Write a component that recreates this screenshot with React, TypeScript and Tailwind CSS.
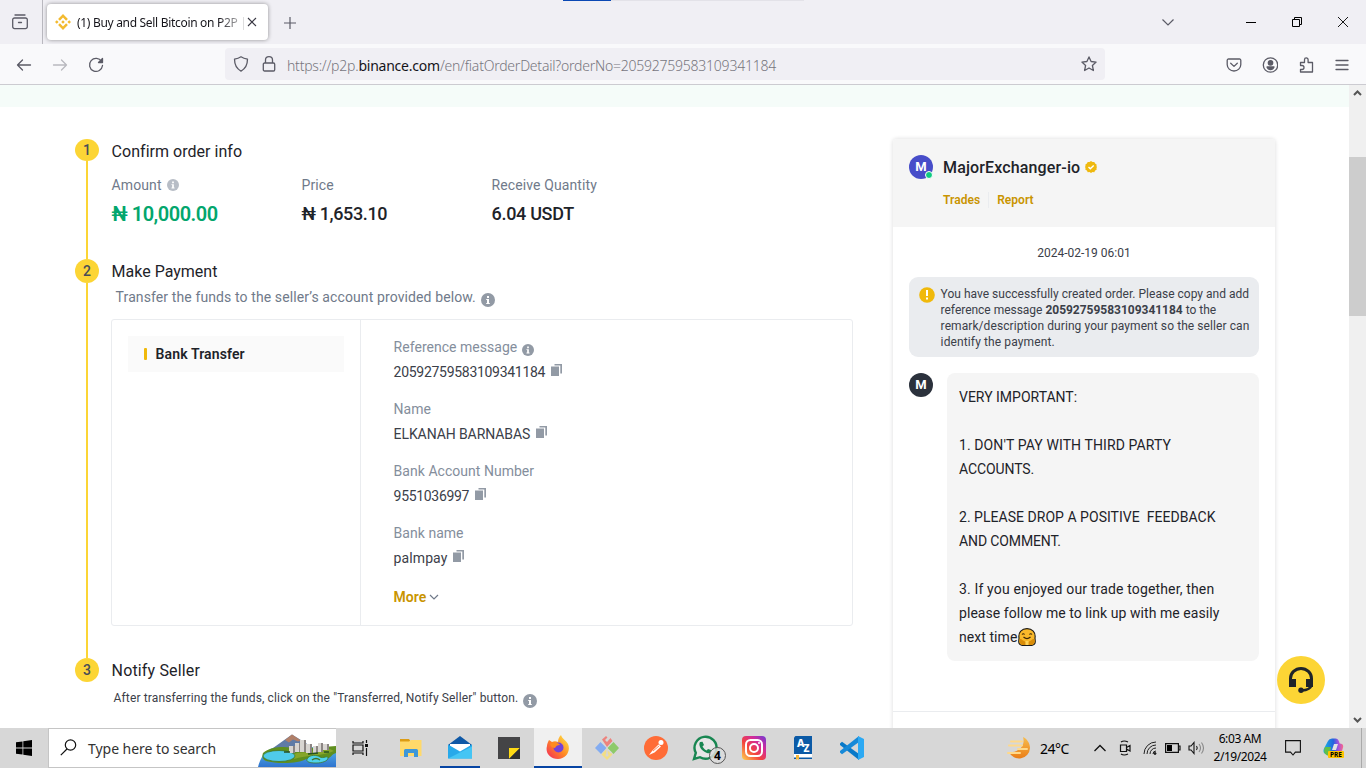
import React from "react";

const INK = "text-[#1e2329]";

function Info({ c = "#929aa5", s = 14 }: { c?: string; s?: number }) {
  return (
    <svg width={s} height={s} viewBox="0 0 14 14" className="shrink-0">
      <circle cx="7" cy="7" r="7" fill={c} />
      <path d="M6 3h2v2H6zM5.2 6H8v4h.8v1H5.2v-1H6V7h-.8z" fill="#fff" />
    </svg>
  );
}

function Copy() {
  return (
    <svg width="11" height="12" viewBox="0 0 11 12" className="shrink-0">
      <path d="M0 2.5h8V12H0zM3.5 0H11v9.5H9.3V1.5H3.5z" fill="#929aa5" />
    </svg>
  );
}

function TopIcon({ children, w = 16 }: { children: React.ReactNode; w?: number }) {
  return (
    <svg width={w} height={w} viewBox="0 0 16 16" fill="none" stroke="#5b5b66" strokeWidth="1.3" strokeLinecap="round" strokeLinejoin="round" className="shrink-0">
      {children}
    </svg>
  );
}

function TabBar() {
  return (
    <div className="flex h-11 bg-[#f0eff4]">
      <div className="flex w-[43px] items-center border-r border-[#b9b8bf] pl-3">
        <TopIcon>
          <path d="M3 1h10M2.5 4h11a1.8 1.8 0 0 1 1.8 1.8v7a1.8 1.8 0 0 1-1.8 1.8h-11A1.8 1.8 0 0 1 .7 12.800v-7A1.800 1.800 0 0 1 2.500 4zM6.500 8.500h3" />
        </TopIcon>
      </div>
      <div className="mt-1 ml-1 flex h-9 w-[221px] items-center rounded bg-white pl-2 shadow-[0_0_4px_rgba(0,0,0,0.4)]">
        <svg width="16" height="16" viewBox="0 0 16 16" fill="#f3ba2f" className="shrink-0">
          <path d="M4.900 6.700 8 3.600l3.100 3.100 1.800-1.800L8 0 3.100 4.900zM0 8l1.800-1.800L3.600 8 1.800 9.800zM4.900 9.300 8 12.400l3.100-3.100 1.800 1.800L8 16l-4.900-4.900zM12.400 8l1.800-1.800L16 8l-1.800 1.800zM9.800 8 8 6.200 6.200 8 8 9.800z" />
        </svg>
        <span className="mt-px ml-[6px] w-[168px] shrink-0 bg-linear-to-r from-[#15141a] from-84% to-[#15141a20] bg-clip-text font-['Noto_Sans'] text-[12px] tracking-[-0.31px] whitespace-nowrap text-transparent">
          (1) Buy and Sell Bitcoin on P2P |
        </span>
        <svg width="10" height="10" viewBox="0 0 10 10" stroke="#3a3944" strokeWidth="1.100" className="ml-[2px]">
          <path d="m1 1 8 8M9 1 1 9" />
        </svg>
      </div>
      <svg width="12" height="12" viewBox="0 0 12 12" stroke="#5b5b66" strokeWidth="1.200" className="mt-[17px] ml-4">
        <path d="M6 0v12M0 6h12" />
      </svg>
      <div className="ml-[267px] flex h-px w-[241px] bg-[#e3e2e8]">
        <div className="h-px w-12 bg-[#0a48b4]" />
      </div>
      <div className="mr-[18px] ml-auto flex h-11 items-center">
        <svg width="12" height="7" viewBox="0 0 12 7" fill="none" stroke="#5b5b66" strokeWidth="1.200" className="mr-[72px]">
          <path d="m.5.5 5.500 5.500L11.500.5" />
        </svg>
        <div className="mr-9 h-px w-[10px] bg-black" />
        <svg width="10" height="10" viewBox="0 0 10 10" fill="none" stroke="#000" className="mr-9">
          <path d="M.5 2.500h7v7h-7zM2.500 2.500v-2h7v7h-2" />
        </svg>
        <svg width="10" height="10" viewBox="0 0 10 10" stroke="#000" strokeWidth=".9">
          <path d="m0 0 10 10M10 0 0 10" />
        </svg>
      </div>
    </div>
  );
}

function NavBar() {
  return (
    <div className="flex h-[41px] items-center border-b border-[#cccbd1] bg-[#f9f9fb] pt-px pl-4">
      <TopIcon><path d="M14.500 8h-13M6.500 3l-5 5 5 5" /></TopIcon>
      <div className="ml-5 flex opacity-40"><TopIcon><path d="M1.500 8h13M9.500 3l5 5-5 5" /></TopIcon></div>
      <div className="ml-5 flex">
        <TopIcon><path d="M13.600 4.500A6.500 6.500 0 1 0 14.500 8.500" /><path d="M14.500 1.500v4h-4z" fill="#5b5b66" /></TopIcon>
      </div>
      <div className="-mt-px ml-[121px] flex h-8 w-[880px] items-center rounded bg-[#f0eff4] pl-2">
        <TopIcon><path d="M8 .8c2 1.400 4 2 6.500 2.300 0 5.400-1.500 9.400-6.500 12-5-2.600-6.500-6.600-6.500-12C4 2.800 6 2.200 8 .8z" /></TopIcon>
        <div className="ml-3 flex"><TopIcon><path d="M3.500 7h9a1.200 1.200 0 0 1 1.200 1.200v5.600a1.200 1.200 0 0 1-1.200 1.200h-9a1.200 1.200 0 0 1-1.200-1.200V8.200A1.200 1.200 0 0 1 3.500 7zM4.500 7V4a3.500 3.300 0 0 1 7 0v3" /></TopIcon></div>
        <span className="mt-[2px] ml-[10px] font-['Noto_Sans'] text-[14px] font-light tracking-[-0.23px] whitespace-nowrap text-[#77767e]">
          https://p2p.<span className="font-normal text-[#15141a]">binance.com</span>/en/fiatOrderDetail?orderNo=20592759583109341184
        </span>
        <div className="mr-2 ml-auto flex">
          <TopIcon><path d="m8 .9 2.100 4.600 5 .6-3.700 3.400 1 5L8 12l-4.400 2.500 1-5L.9 6.100l5-.6z" /></TopIcon>
        </div>
      </div>
      <div className="mr-4 ml-auto flex gap-5">
        <TopIcon><path d="M2.500 2h11a1.300 1.300 0 0 1 1.300 1.300V7.500a6.800 6.500 0 0 1-13.600 0V3.300A1.300 1.300 0 0 1 2.500 2zM4.700 6.300 8 9.400l3.300-3.100" /></TopIcon>
        <TopIcon><circle cx="8.500" cy="8" r="7.200" /><circle cx="8.500" cy="5.800" r="2.200" fill="#5b5b66" /><path d="M5 10h7c-.8 2-2 2.600-3.500 2.600S5.800 12 5 10z" fill="#5b5b66" /></TopIcon>
        <TopIcon><path d="M2.500 8.500V5.500H6.500V2.700a1.800 1.800 0 0 1 3.600 0v2.800h4.400V15h-12v-2.500h1.500a2 2 0 0 0 0-4z" /></TopIcon>
        <TopIcon><path d="M2 3.500h12M2 8h12M2 12.500h12" /></TopIcon>
      </div>
    </div>
  );
}

function Step({ n, h = "h-6" }: { n: number; h?: string }) {
  return (
    <div className={`flex w-6 shrink-0 items-center justify-center rounded-[50%] bg-[#fcd535] text-[14px] font-medium text-[#474d57] ${h}`}>{n}</div>
  );
}

const details = [
  ["Reference message", "20592759583109341184", "tracking-[-0.29px]"],
  ["Name", "ELKANAH BARNABAS", "tracking-[-0.09px]"],
  ["Bank Account Number", "9551036997", "tracking-[-0.32px]"],
  ["Bank name", "palmpay", "tracking-[0.1px]"],
];

function Order() {
  return (
    <div className="flex w-[778px] pt-8">
      <div className="mr-3 flex w-6 shrink-0 flex-col items-center">
        <Step n={1} h="h-[22px]" />
        <div className="h-[98px] w-0.5 bg-[#fcd535]" />
        <Step n={2} />
        <div className="h-[375px] w-0.5 bg-[#fcd535]" />
        <Step n={3} />
      </div>
      <div className="flex w-[742px] flex-col pt-px">
        <div className={`ml-[0.6px] flex h-6 items-center text-[16px] tracking-[0.03px] ${INK}`}>Confirm order info</div>
        <div className="mt-[9px] ml-[0.6px] flex h-6 items-center text-[14px] tracking-[0.1px] text-[#707a8a]">
          <span className="flex w-[190px] items-center gap-[5px]">Amount <Info c="#b7bdc6" s={12} /></span>
          <span className="w-[190px]">Price</span>
          <span>Receive Quantity</span>
        </div>
        <div className={`mt-[5px] ml-[0.6px] flex h-6 items-center text-[18px] font-medium tracking-[-0.32px] ${INK}`}>
          <span className="w-[190px] text-[20px] font-semibold tracking-[-0.5px] text-[#03a66d]">₦ 10,000.00</span>
          <span className="-mt-[2px] w-[190px] tracking-[-0.38px]">₦ 1,653.10</span>
          <span className="-mt-[2px]">6.04 USDT</span>
        </div>
        <div className={`mt-[34px] ml-[0.6px] flex h-6 items-center text-[16px] ${INK}`}>Make Payment</div>
        <div className="ml-[4.6px] flex h-[26px] items-center gap-[5.400px] text-[14px] text-[#707a8a]">
          <span className="tracking-[0.11px]">Transfer the funds to the seller’s account provided below.</span>
          <span className="mt-[5px]"><Info /></span>
        </div>
        <div className="mt-[9px] flex h-[307px] rounded-[3px] border border-[#eaecef]">
          <div className="w-[249px] border-r border-[#eaecef] p-4">
            <div className={`flex h-9 items-center bg-[#fafafa] pl-4 text-[14px] font-semibold tracking-[0.12px] ${INK}`}>
              <span className="mr-[8.600px] h-3 w-[3px] rounded-[1px] bg-[#f0b90b]" />Bank Transfer
            </div>
          </div>
          <div className="flex flex-col pt-[15px] pl-[32.600px] text-[14px]">
            {details.map(([k, v, t], i) => (
              <div key={k} className="h-[62px]">
                <div className="flex h-6 items-center gap-[5px] tracking-[0.03px] text-[#848e9c]">{k}{i === 0 && <span className="mt-[5px]"><Info s={12} /></span>}</div>
                <div className={`flex h-[26px] items-center gap-1.5 text-[#3b4049] ${t}`}>{v}<span className="-mt-[5px]"><Copy /></span></div>
              </div>
            ))}
            <div className="mt-[2px] flex h-6 items-center gap-[3px] font-semibold text-[#c99400]">More
              <svg width="10" height="6" viewBox="0 0 10 6" fill="none" stroke="#707a8a" strokeWidth="1.200"><path d="m1 1 4 4 4-4" /></svg>
            </div>
          </div>
        </div>
        <div className={`mt-[33px] ml-[0.6px] flex h-6 items-center text-[16px] tracking-[0.15px] ${INK}`}>Notify Seller</div>
        <div className="mt-px ml-[2.600px] flex h-7 items-center gap-[5px] text-[12px] tracking-[0.14px] text-[#3b4049]">
          <span>After transferring the funds, click on the "Transferred, Notify Seller" button.</span>
          <span className="mt-1.5"><Info /></span>
        </div>
      </div>
    </div>
  );
}

function Chat() {
  return (
    <div className="mt-8 ml-10 flex h-[620px] w-[382px] shrink-0 flex-col rounded-t-[4px] bg-white shadow-[0_0_4px_rgba(20,21,26,0.16)]">
      <div className="h-[88px] rounded-t-[4px] bg-[#f5f5f5] pt-4 pl-4">
        <div className="flex h-6 items-center">
          <div className="relative flex h-6 w-6 items-center justify-center rounded-full bg-[#474dc9] text-[13px] font-bold text-white">M
            <span className="absolute right-0 bottom-0 h-[8px] w-[8px] rounded-full border border-white bg-[#0ecb81]" />
          </div>
          <span className={`mt-px ml-[10px] text-[16px] font-medium tracking-[0.14px] ${INK}`}>MajorExchanger-io</span>
          <svg width="12" height="12" viewBox="0 0 12 12" className="ml-[5px]">
            <path d="m6 0 1.500 1L9.300.9l.8 1.600 1.500.9L11.500 5.200 12 6l-.5 1 .1 1.700-1.500.9-.8 1.600L7.500 11 6 12l-1.500-1-1.800.2-.8-1.600L.4 8.700.5 7 0 6l.5-1L.4 3.400l1.500-.9.8-1.600L4.500 1z" fill="#efb90f" />
            <path d="m3.500 6 1.800 1.800L8.700 4.400" fill="none" stroke="#fff" strokeWidth="1.400" />
          </svg>
        </div>
        <div className="mt-3 ml-[34px] flex h-[18px] items-center text-[12px] font-semibold tracking-[0.04px] text-[#c99400]">
          <span>Trades</span><span className="mx-2 h-4 w-px bg-[#eaecef]" /><span>Report</span>
        </div>
      </div>
      <div className="mt-4 flex h-5 items-center justify-center text-[12px] text-[#3b4049]">2024-02-19 06:01</div>
      <div className="mx-4 mt-[14px] flex h-20 rounded-[9px] bg-[#eaecef] pt-2 pl-[10px] text-[12px] leading-4 text-[#3b4049]">
        <svg width="16" height="16" viewBox="0 0 16 16" className="mt-[2px] mr-[5.600px] shrink-0">
          <circle cx="8" cy="8" r="7.800" fill="#f0b90b" /><path d="M7 3h2v6H7zM7 10.500h2v2H7z" fill="#fff" />
        </svg>
        <div className="pt-px whitespace-nowrap">
          <div className="tracking-[0.015px]">You have successfully created order. Please copy and add</div>
          <div className="tracking-[-0.02px]">reference message <b>20592759583109341184</b> to the</div>
          <div className="tracking-[0.08px]">remark/description during your payment so the seller can</div>
          <div className="tracking-[0.12px]">identify the payment.</div>
        </div>
      </div>
      <div className="mx-4 mt-4 flex">
        <div className="flex h-6 w-6 items-center justify-center rounded-full bg-[#2b313c] text-[13px] font-bold text-white">M</div>
        <div className={`ml-[14px] h-[288px] w-[312px] rounded-lg bg-[#f5f5f5] p-3 text-[14px] leading-6 tracking-[0.06px] whitespace-pre ${INK}`}>
          <div className="tracking-normal">VERY IMPORTANT:</div>
          <div className="mt-6 tracking-[0.1px]">1. DON'T PAY WITH THIRD PARTY</div>
          <div className="tracking-[-0.1px]">ACCOUNTS.</div>
          <div className="mt-6 tracking-[0.03px]">2. PLEASE DROP A POSITIVE  FEEDBACK</div>
          <div className="tracking-[-0.12px]">AND COMMENT.</div>
          <div className="mt-6 tracking-[0.15px]">3. If you enjoyed our trade together, then</div>
          <div>please follow me to link up with me easily</div>
          <div className="flex items-center">next time
            <svg width="18" height="18" viewBox="0 0 18 18" className="-mt-px ml-px">
              <path d="M1 10C0 4 4 .6 9 .6S18 4 17 10l.3 3.500c0 2-1.500 3.500-3.500 3.900H4.200C2.200 17 .7 15.500.7 13.500z" fill="#f9b82a" stroke="#1b1b1b" strokeWidth="1.100" />
              <path d="M1.300 12.500c0-2 2-2 3-.5l3.500 2v3H4c-1.800-.5-2.700-2.500-2.700-4.500zM16.700 12.500c0-2-2-2-3-.5l-3.500 2v3H14c1.800-.5 2.700-2.500 2.700-4.500z" fill="#d98c08" />
              <path d="M7.500 13h3v4h-3z" fill="#ffd257" />
              <path d="M4 6.500q1.300-1.500 2.600 0M11.400 6.500q1.300-1.500 2.600 0M5.500 9q3.500 3.200 7 0" stroke="#3a2608" strokeWidth="1.100" fill="none" />
            </svg>
          </div>
        </div>
      </div>
      <div className="mt-[50px] h-px bg-[#eaecef]" />
    </div>
  );
}

function Scrollbar() {
  return (
    <div className="flex w-[17px] shrink-0 flex-col items-center bg-[#f0f0f0]">
      <svg width="9" height="6" viewBox="0 0 9 6" fill="none" stroke="#555" strokeWidth="2" className="mt-[5px]"><path d="m1 5 3.500-3.500L8 5" /></svg>
      <div className="mt-[61px] h-[159px] w-full bg-[#cdcdcd]" />
      <svg width="9" height="6" viewBox="0 0 9 6" fill="none" stroke="#555" strokeWidth="2" className="mt-auto mb-[5px]"><path d="m1 1 3.500 3.500L8 1" /></svg>
    </div>
  );
}

function Landscape() {
  return (
    <svg width="78" height="33" viewBox="0 0 78 33" className="ml-auto self-end">
      <defs>
        <linearGradient id="sea" x1="0" y1="0" x2="0" y2="1"><stop stopColor="#57b5e8" /><stop offset="1" stopColor="#2f74cf" /></linearGradient>
      </defs>
      <path d="M0 33C3 21 9 14 20 13h58v20z" fill="url(#sea)" />
      <path d="M15 14 34 .5 54 13l-4 6H15z" fill="#5f7ba6" /><path d="m27 6 7-5.500 9 6-3 1-5-2-4 3z" fill="#b07f68" />
      <path d="M5 19c8-7 24-7 34-4l39-3v7c-6 2-3 4-10 6-8 1-12-2-20 0-7 5-30 5-40 2-4-2-4-5-3-8z" fill="#5f8f1e" />
      <path d="M36 20c8-3 20-1 36-5l4 2c-10 5-28 4-40 8z" fill="#86a52a" />
      <ellipse cx="21" cy="22" rx="16" ry="5.500" fill="#4fcbe9" stroke="#3e6d18" strokeWidth=".7" />
      <path d="M49 25c3-5 10-4 13-2s8-2 8 1-6 5-12 5-10-1-9-4z" fill="#4fd3ea" stroke="#3e6d18" strokeWidth=".7" />
      <path d="M54 26q4-3 8 0" fill="none" stroke="#426f28" strokeWidth="1.500" />
      <path d="M31 12h4v7h-4zM37 9h4v9h-4zM42 6h4v12h-4zM48 10h4v9h-4zM55 12h3v7h-3zM60 9h3v9h-3zM65 10h4v6h-4z" fill="#d8d5d1" />
      <path d="M35 12h2v7h-2zM41 9h1v9h-1zM46 6h2v12h-2zM52 10h2v9h-2zM58 12h2v7h-2zM63 9h2v9h-2zM69 10h2v6h-2z" fill="#8b8583" />
      <path d="M26 18h6M50 20l10-1M66 18h5" stroke="#27521f" strokeWidth="1.500" />
    </svg>
  );
}

function TaskApp({ children, cls = "" }: { children: React.ReactNode; cls?: string }) {
  return <div className={`flex h-10 w-12 items-center justify-center ${cls}`}><svg width="26" height="26" viewBox="0 0 26 26" className="overflow-visible">{children}</svg></div>;
}

function TaskIcons() {
  return (
    <>
      <TaskApp cls="ml-[18px]">
        <path d="M2 4h9l2 3H2z" fill="#dc9c14" /><path d="M2 6.500h9l2-1.500h10.500v16H2z" fill="#ffd96a" />
        <path d="M6 22v-6.500q0-1.500 1.500-1.500h11q1.500 0 1.500 1.500V22h-4v-4h-6v4z" fill="#3e97d8" />
      </TaskApp>
      <TaskApp cls="ml-px">
        <path d="M1 10 13 1l12 9v6H1z" fill="#0f58a6" /><path d="M3 9h20v8H3z" fill="#fff" />
        <path d="m1 9.500 12 7 12-7v14H1z" fill="#27a9ea" /><path d="m1 23.500 24-12v12z" fill="#45c5f4" />
        <path d="M-7 31h40v2H-7z" fill="#0745a3" />
      </TaskApp>
      <TaskApp cls="mx-px"><path d="M2 2h22v22H2z" fill="#444446" /><path d="M13 13h11L13 24z" fill="#ffda14" /><path d="M13 24 24 13v11z" fill="#303032" /></TaskApp>
      <div className="flex h-10 w-12 flex-col items-center border-b-2 border-[#0745a3] bg-[#f0f0f0] pt-[7px]">
        <svg width="24" height="25" viewBox="0 0 24 25">
          <defs>
            <linearGradient id="fx" x1="1" y1="0" x2="0" y2="1"><stop stopColor="#fff04a" /><stop offset=".5" stopColor="#ff8a24" /><stop offset="1" stopColor="#f3245f" /></linearGradient>
          </defs>
          <path d="M3 5c1 1 2 1 3 2 2-1 4-1 6 0 0-3 1-5 3-7 1 4 5 5 7 9 3 7-2 15-10 15S-1 18 1 11c0-2 1-4 2-6z" fill="url(#fx)" />
          <circle cx="12.500" cy="12.500" r="5" fill="#7542d8" /><path d="M4 9c4-3 9-1 10 1-3 0-4 1-5 3-2 0-4-1-5-4z" fill="#ff8b20" />
        </svg>
      </div>
      <TaskApp cls="ml-px">
        <g opacity=".9"><path d="m8 4.500 4-3.500 1.500 1.500-2.500 2.500 2 2L16.500 3 18.500 6 13 12z" fill="#f07a74" /><path d="M1 13 6.500 7l6 6-5.500 6z" fill="#7ba8f4" /><path d="m13.500 13 6-6 5.500 6-5.500 6z" fill="#86c95f" /><path d="m7.500 19.500 5.500-6 5.500 6L13 25z" fill="#f6df7d" /><path d="M13 13v7M14 15l3.500 3" stroke="#d6d6d6" strokeWidth="1.500" /><circle cx="13" cy="20" r="1.500" fill="#d6d6d6" /></g>
      </TaskApp>
      <TaskApp cls="ml-px"><circle cx="13" cy="13" r="12" fill="#ff6c37" /><circle cx="18" cy="7.500" r="2.500" fill="#fff" /><path d="m6 20 3.500-4.500 6-6 2.500 2-6.500 6z" fill="#fff" /><path d="m10 16 6-5" stroke="#ff6c37" strokeWidth=".8" /></TaskApp>
      <TaskApp cls="ml-px">
        <path d="m2 24 1.800-6.200a11 11 0 1 1 4.200 4.400z" fill="#e6e6e6" stroke="#188651" strokeWidth="2.400" />
        <path d="M8 7c-2 3 1 9 7 11 3 1 5-1 4-3l-3-1-1.500 1.500C12 14 11 12.500 10.500 11.500L12 10l-1.500-3.300z" fill="#188651" />
        <circle cx="25.500" cy="20.500" r="8" fill="#dcdcdc" fillOpacity=".85" stroke="#555" />
        <text x="25.500" y="25" textAnchor="middle" fontSize="12" fontWeight="700" fontFamily="Noto Sans">4</text>
      </TaskApp>
      <TaskApp cls="ml-px">
        <defs><linearGradient id="ig" x1="0" y1="1" x2="1" y2="0"><stop stopColor="#ffd34f" /><stop offset=".4" stopColor="#f3443d" /><stop offset=".7" stopColor="#d22b9b" /><stop offset="1" stopColor="#6d3bd5" /></linearGradient></defs>
        <rect x="1" y="1" width="24" height="24" rx="4" fill="url(#ig)" /><rect x="5" y="5" width="16" height="16" rx="4.500" fill="none" stroke="#fff" strokeWidth="2" /><circle cx="13" cy="13" r="4" fill="none" stroke="#fff" strokeWidth="2" /><circle cx="18" cy="8" r="1" fill="#fff" />
      </TaskApp>
      <TaskApp cls="ml-px">
        <path d="M5.500 1H22v18H4V2.500z" fill="#0b5aa6" /><path d="M4 19h18v4H4z" fill="#fff" /><path d="M4 22.500h18V24H4z" fill="#0b5aa6" /><path d="M6 20h3v5l-1.500-1L6 25z" fill="#f6b83a" />
        <text x="7" y="12" fontSize="10.500" fontWeight="800" fill="#fff" fontFamily="Noto Sans">A</text><text x="13.500" y="17" fontSize="10" fontWeight="800" fill="#fff" fontFamily="Noto Sans">Z</text>
      </TaskApp>
      <TaskApp cls="ml-px">
        <path d="m1 8.500 2-1.700L20 19v6L1 10z" fill="#0879c9" /><path d="m1 17.500 2 1.700L20 7V1L1 16z" fill="#1689d8" /><path d="m19 1 6 3v18l-6 3z" fill="#2ca9f3" />
      </TaskApp>
    </>
  );
}

function Tray() {
  return (
    <div className="ml-auto flex h-10 items-center font-['Noto_Sans'] text-black">
      <svg width="24" height="24" viewBox="0 0 24 24">
        <defs><linearGradient id="moon" x1="0" y1="0" x2="0" y2="1"><stop stopColor="#f7bd4e" /><stop offset="1" stopColor="#ea7d16" /></linearGradient></defs>
        <path d="M16 1c4 2 7 6 7 11a11 11 0 0 1-21 4c8 1 17-5 14-15z" fill="url(#moon)" />
        <path d="M4 5.500h11M2 9.500h13M11 13h9M1 17h12" stroke="#ffd98a" strokeWidth="2" strokeLinecap="round" />
      </svg>
      <span className="ml-[9px] w-[54px] text-[14px] tracking-[-0.5px]">24°C</span>
      <svg width="12" height="8" viewBox="0 0 12 8" fill="none" stroke="#111" strokeWidth="1.300"><path d="m.5 7 5.500-5.500L11.500 7" /></svg>
      <svg width="12" height="16" viewBox="0 0 12 16" fill="none" stroke="#111" strokeWidth="1.200" className="ml-[13px]"><path d="M1.500 5h6v6.500h-6zM7.500 7.500l3.500-2v5.500l-3.500-2M2 2q3-2 7 0M2 14q3 2 7 0" /></svg>
      <svg width="14" height="14" viewBox="0 0 14 14" fill="none" stroke="#222" className="ml-[12px]"><path d="M1 13A12 12 0 0 1 13 1M4 13a9 9 0 0 1 9-9M7 13a6 6 0 0 1 6-6M10 13a3 3 0 0 1 3-3" /><circle cx="12" cy="12.500" r="1" fill="#111" /></svg>
      <svg width="16" height="10" viewBox="0 0 16 10" className="ml-[8px]"><path d="M.6.6h12.800v8.800H.6zM13.500 3H15v4h-1.500" fill="none" stroke="#111" strokeWidth="1.200" /><path d="M2 2h5v6H2z" /></svg>
      <svg width="17" height="14" viewBox="0 0 17 14" fill="none" stroke="#111" strokeWidth="1.100" className="ml-[7px]"><path d="M1 5h2l3-3.500v11L3 9H1zM8.500 5q1.500 2 0 4" /><path d="M11 3q3 4 0 8M13.500 1.500q4 5.500 0 11" stroke="#888" /></svg>
      <div className="ml-1 w-[62px] text-center text-[12px] leading-[18px] tracking-[-0.4px] whitespace-nowrap">
        <div>6:03 AM</div><div className="tracking-[-0.45px]">2/19/2024</div>
      </div>
      <svg width="16" height="16" viewBox="0 0 16 16" fill="none" stroke="#111" strokeWidth="1.100" className="ml-[14px]"><path d="M.6.6h14.800v11.500h-5L8 15l-2.500-2.900H.6z" /></svg>
      <svg width="22" height="20" viewBox="0 0 22 20" className="ml-[22px]">
        <defs><linearGradient id="cp" x1="0" x2="1"><stop stopColor="#14b6e6" /><stop offset=".5" stopColor="#2464df" /><stop offset=".75" stopColor="#a252de" /><stop offset="1" stopColor="#fb6989" /></linearGradient></defs>
        <path d="M5 3q1-2.500 4-2.500h3.500q2.500 0 3.500 3l.7 2q4.300 0 3.300 4l-2 7H4q-5-1-3-6z" fill="url(#cp)" /><path d="m2 9 6 0-2 9q-7-2-4-9z" fill="#61bf4a" /><path d="m11 6 4 0-2 6H9z" fill="#e4e4e4" />
        <rect x="5" y="13" width="16" height="7" rx="1" fill="#ffc400" /><text x="13" y="18.800" textAnchor="middle" fontSize="6.500" fontWeight="700" fontFamily="Noto Sans">PRE</text>
      </svg>
      <div className="ml-4 h-10 w-[5px] border-l border-[#aaa]" />
    </div>
  );
}

export default function App() {
  return (
    <div className="flex h-[768px] w-[1366px] flex-col overflow-hidden bg-white font-['Roboto',sans-serif]">
      <TabBar />
      <NavBar />
      <div className="flex h-[643px] shrink-0 overflow-hidden">
        <div className="relative w-[1349px]">
          <div className="h-[22px] bg-[#f5fcf9]" />
          <div className="flex pl-[75px]">
            <Order />
            <Chat />
          </div>
          <div className="absolute top-[571px] left-[1277px] flex h-12 w-12 items-center justify-center rounded-full bg-[#fcd535]">
            <svg width="26" height="26" viewBox="0 0 26 26">
              <path d="M2.500 13V11.500a10.500 10 0 0 1 21 0V13" fill="none" stroke="#1e2329" strokeWidth="3" /><path d="M1 12h7v8H1zM18 12h7v8h-7z" fill="#1e2329" /><path d="M23.500 18q-1 5-10 5.500" fill="none" stroke="#1e2329" strokeWidth="2.500" /><circle cx="13" cy="23.200" r="2.700" fill="#1e2329" />
            </svg>
          </div>
        </div>
        <Scrollbar />
      </div>
      <div className="flex h-10 shrink-0 bg-[#d7d7d7]">
        <svg width="16" height="16" viewBox="0 0 16 16" className="mt-3 ml-4"><path d="M0 2.300 6.500 1.400v6.200H0zM7.300 1.300 16 0v7.600H7.300zM0 8.400h6.500v6.200L0 13.700zM7.300 8.400H16V16l-8.700-1.300z" /></svg>
        <div className="ml-4 flex w-[288px] border border-r-0 border-[#c5c5c5] bg-white">
          <svg width="17" height="17" viewBox="0 0 17 17" fill="none" stroke="#111" strokeWidth="1.200" className="mt-[10px] ml-[11px]"><circle cx="10.500" cy="6" r="5.200" /><path d="M7 10 .8 16.200" /></svg>
          <span className="mt-[10px] ml-[11px] font-['Noto_Sans'] text-[14px] leading-5 tracking-[-0.04px] whitespace-nowrap text-[#333]">Type here to search</span>
          <Landscape />
        </div>
        <svg width="17" height="16" viewBox="0 0 17 16" fill="none" stroke="#111" strokeWidth="1.200" className="mt-3 ml-4"><path d="M1 1v2h10V1M1 5h10v6H1zM1 15v-2h10v2M14.500 0v3M14.500 8v8" /><path d="M13 4h3v3h-3z" fill="#111" stroke="none" /></svg>
        <TaskIcons />
        <Tray />
      </div>
    </div>
  );
}
